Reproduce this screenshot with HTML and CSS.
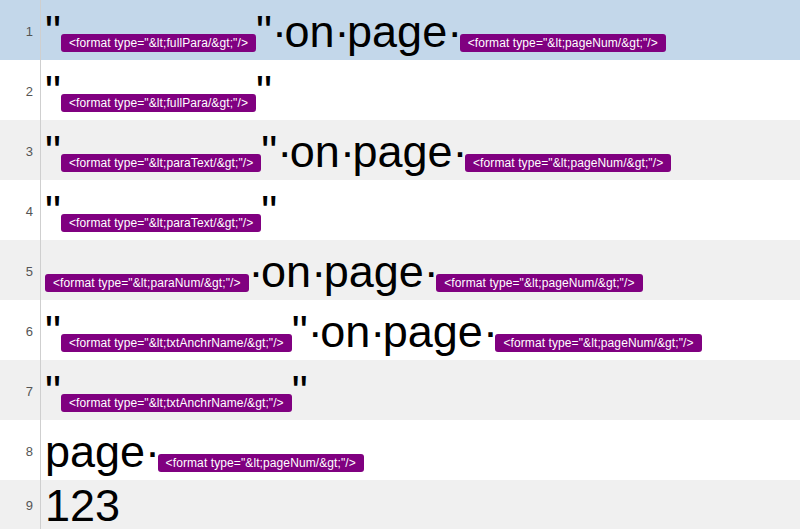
FILE: index.html
```html
<!DOCTYPE html>
<html lang="en">

<head>
    <meta charset="UTF-8">
    <title>Cross-reference formats</title>
    <link rel="stylesheet" href="styles.css">
</head>

<body>
    <div class="editor">
        <div class="line current">
            <div class="num">1</div>
            <div class="text">"<span class="tag">&lt;format type="&amp;lt;fullPara/&amp;gt;"/&gt;</span>"<span class="ws">·</span>on<span class="ws">·</span>page<span class="ws">·</span><span class="tag">&lt;format type="&amp;lt;pageNum/&amp;gt;"/&gt;</span></div>
        </div>
        <div class="line">
            <div class="num">2</div>
            <div class="text">"<span class="tag">&lt;format type="&amp;lt;fullPara/&amp;gt;"/&gt;</span>"</div>
        </div>
        <div class="line alt">
            <div class="num">3</div>
            <div class="text">"<span class="tag">&lt;format type="&amp;lt;paraText/&amp;gt;"/&gt;</span>"<span class="ws">·</span>on<span class="ws">·</span>page<span class="ws">·</span><span class="tag">&lt;format type="&amp;lt;pageNum/&amp;gt;"/&gt;</span></div>
        </div>
        <div class="line">
            <div class="num">4</div>
            <div class="text">"<span class="tag">&lt;format type="&amp;lt;paraText/&amp;gt;"/&gt;</span>"</div>
        </div>
        <div class="line alt">
            <div class="num">5</div>
            <div class="text"><span class="tag">&lt;format type="&amp;lt;paraNum/&amp;gt;"/&gt;</span><span class="ws">·</span>on<span class="ws">·</span>page<span class="ws">·</span><span class="tag">&lt;format type="&amp;lt;pageNum/&amp;gt;"/&gt;</span></div>
        </div>
        <div class="line">
            <div class="num">6</div>
            <div class="text">"<span class="tag">&lt;format type="&amp;lt;txtAnchrName/&amp;gt;"/&gt;</span>"<span class="ws">·</span>on<span class="ws">·</span>page<span class="ws">·</span><span class="tag">&lt;format type="&amp;lt;pageNum/&amp;gt;"/&gt;</span></div>
        </div>
        <div class="line alt">
            <div class="num">7</div>
            <div class="text">"<span class="tag">&lt;format type="&amp;lt;txtAnchrName/&amp;gt;"/&gt;</span>"</div>
        </div>
        <div class="line">
            <div class="num">8</div>
            <div class="text">page<span class="ws">·</span><span class="tag">&lt;format type="&amp;lt;pageNum/&amp;gt;"/&gt;</span></div>
        </div>
        <div class="line alt plain">
            <div class="num">9</div>
            <div class="text">123</div>
        </div>
    </div>
</body>

</html>
```

FILE: styles.css
```css
* {
    margin: 0;
    padding: 0;
    box-sizing: border-box;
}

body {
    background-color: white;
    font-family: "Liberation Sans", Arial, sans-serif;
    overflow: hidden;
}

.editor {
    width: 800px;
}

.line {
    display: flex;
    height: 60px;
    background-color: white;
}

/* lines without inline tags are shorter */
.line.plain {
    height: 49px;
}

.line.alt {
    background-color: #f0f0f0;
}

.line.current {
    background-color: #c3d7ea;
}

.num {
    width: 41px;
    flex-shrink: 0;
    border-right: 1px solid #cfcfcf;
    padding-right: 7px;
    padding-top: 2px;
    display: flex;
    align-items: center;
    justify-content: flex-end;
    font-size: 13px;
    color: #555;
}

.text {
    align-self: center;
    padding-left: 4px;
    padding-top: 3px;
    font-size: 45px;
    line-height: 54px;
    color: #000;
    white-space: pre;
}

.plain .text {
    line-height: 44px;
}

/* visible space marker */
.ws {
    letter-spacing: -2.5px;
}

.tag {
    display: inline-block;
    background-color: #800080;
    color: white;
    font-size: 12px;
    line-height: 14px;
    padding: 2px 8px;
    border-radius: 3px;
    vertical-align: baseline;
    letter-spacing: 0.1px;
}
```
